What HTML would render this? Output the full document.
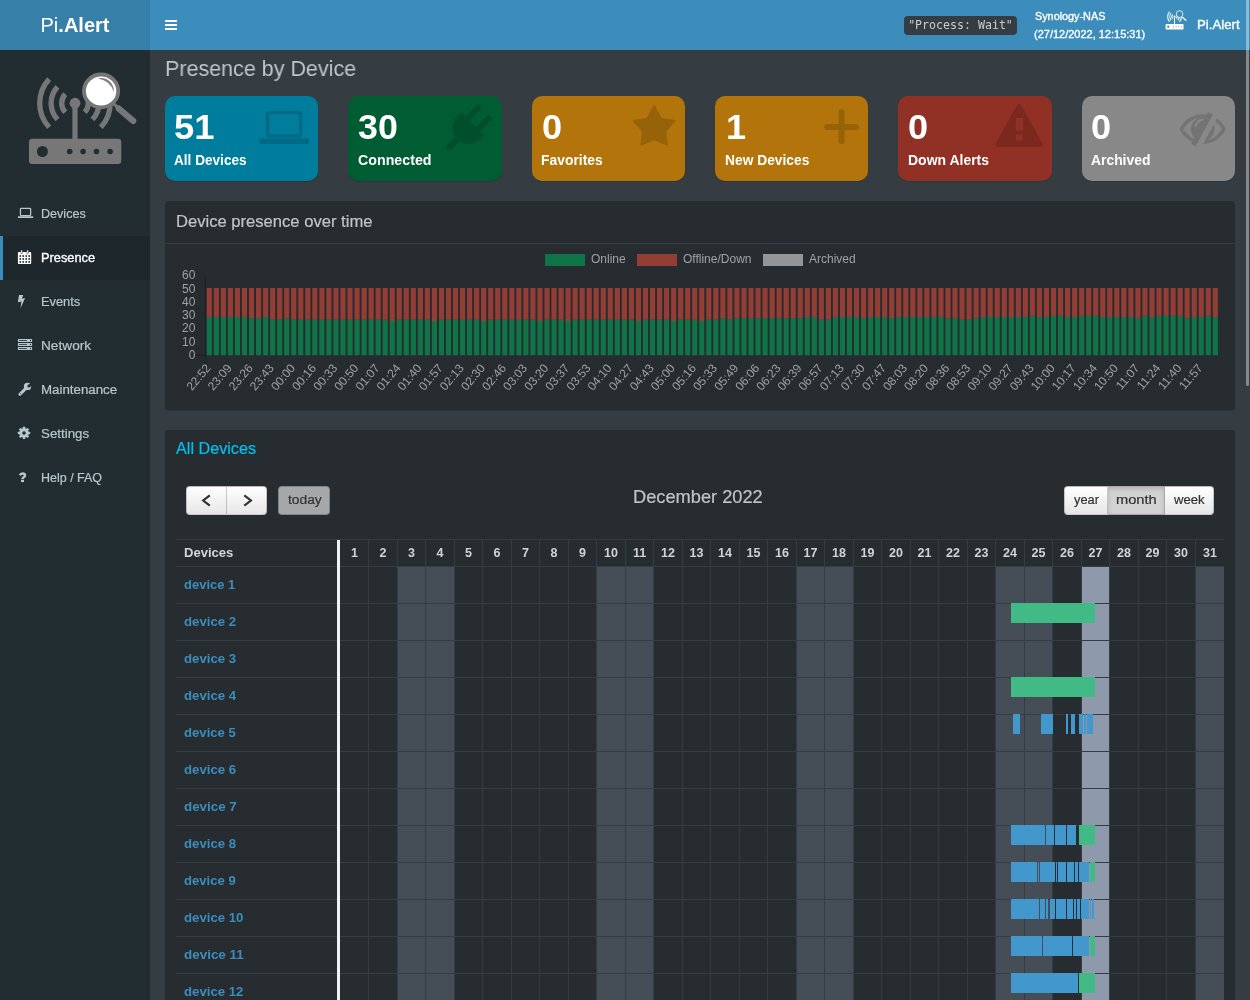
<!DOCTYPE html>
<html lang="en">
<head>
<meta charset="utf-8">
<title>Pi.Alert - Presence</title>
<style>
*{box-sizing:border-box}
html,body{margin:0;padding:0}
body{width:1250px;height:1000px;overflow:hidden;position:relative;background:#353c42;font-family:"Liberation Sans",Arial,sans-serif;font-size:14px;color:#bec5cb}
#root{position:absolute;left:0;top:0;width:1250px;height:1000px;overflow:hidden;will-change:transform}
.abs{position:absolute}
/* header */
#hdr{position:absolute;left:0;top:0;width:1250px;height:50px;background:#3c8dbc}
#logo{position:absolute;left:0;top:0;width:150px;height:50px;background:#367fa9;color:#fff;font-size:20px;line-height:50px;text-align:center}
#logo b{font-weight:700}
#burger{position:absolute;left:165px;top:20px;width:12px;height:10px}
#burger i{position:absolute;left:0;width:12px;height:2px;background:#fff}
#proc{position:absolute;left:904px;top:16px;width:113px;height:19px;background:#353c42;border-radius:4px;color:#c8ced3;font-family:"DejaVu Sans Mono","Liberation Mono",monospace;font-size:11.6px;line-height:19px;text-align:center;white-space:nowrap}
.hl1{position:absolute;color:#fff;font-weight:700;font-size:11.5px;white-space:nowrap;transform-origin:0 0}
#hname{position:absolute;left:1197px;top:15px;color:#fff;font-size:14px;font-weight:700;white-space:nowrap;transform-origin:0 0}
/* sidebar */
#side{position:absolute;left:0;top:50px;width:150px;height:950px;background:#222d32}
.mi{position:absolute;left:0;width:150px;height:44px;color:#b8c7ce;font-size:13.5px;line-height:44px}
.mi span{position:absolute;left:41px;top:0;white-space:nowrap;transform-origin:0 50%}
.mi.act{background:#1e282c;border-left:3px solid #3c8dbc;color:#fff}
.mi.act span{left:38px;font-weight:700}
.mi svg{position:absolute;left:17px;top:15px}
.mi.act svg{left:14px}
/* title */
#title{position:absolute;left:165px;top:51px;font-size:22.5px;line-height:34px;color:#bec5cb;white-space:nowrap;transform-origin:0 50%}
/* small boxes */
.sb{position:absolute;top:96px;height:85px;border-radius:10px;color:#fff;overflow:hidden;box-shadow:0 1px 1px rgba(0,0,0,.12)}
.sb h3{position:absolute;left:9px;top:10px;margin:0;font-size:35px;line-height:40px;font-weight:700;transform-origin:0 50%}
.sb p{position:absolute;left:10px;top:53px;margin:0;font-size:14.5px;line-height:20px;font-weight:700;white-space:nowrap;transform-origin:0 50%}
.sb svg{position:absolute}
/* boxes */
.box{position:absolute;left:165px;width:1070px;background:#272c30;border-radius:3px;box-shadow:0 1px 1px rgba(0,0,0,.1)}
.bt{position:absolute;left:11px;font-size:16.5px;white-space:nowrap;transform-origin:0 50%}
/* calendar */
.btn{position:absolute;top:486px;height:29px;background:linear-gradient(#fff,#e6e6e6);color:#333;font-size:13.5px;line-height:27px;text-align:center;border:1px solid rgba(0,0,0,.2)}
.dh{position:absolute;top:540px;height:26px;line-height:27px;text-align:center;font-weight:700;font-size:12.5px;color:#d0d4d8}
.we{position:absolute;top:567px;height:433px;background:#454d57}
.td{position:absolute;top:567px;height:433px;background:#8e9aab}
.vl{position:absolute;top:540px;height:460px;width:1px;background:#363c43}
.hl{position:absolute;left:176px;width:1048px;height:1px;background:#363c43}
.dev{position:absolute;left:184px;height:36px;line-height:35px;color:#3c8dbc;font-weight:700;font-size:13.5px;white-space:nowrap;transform-origin:0 50%}
.t{position:absolute;white-space:nowrap;transform-origin:0 0}
.ev{position:absolute;height:20px}
.evb{background:#4297cd}
.evg{background:#42ba85}
</style>
</head>
<body>
<div id="root">
<!-- header -->
<div id="hdr">
  <div id="logo">Pi<b>.Alert</b></div>
  <div id="burger"><i style="top:0"></i><i style="top:4px"></i><i style="top:8px"></i></div>
  <div id="proc">"Process: Wait"</div>
</div>
<!-- sidebar -->
<div id="side">
  <div class="mi" style="top:141px"></div>
  <div class="mi act" style="top:186px"></div>
  <div class="mi" style="top:229px"></div>
  <div class="mi" style="top:273px"></div>
  <div class="mi" style="top:317px"></div>
  <div class="mi" style="top:361px"></div>
  <div class="mi" style="top:405px"></div>
</div>

<!-- small boxes -->
<div class="sb" style="left:165px;width:153px;background:#007c9c"></div>
<div class="sb" style="left:348px;width:154px;background:#005c32"></div>
<div class="sb" style="left:532px;width:153px;background:#b2740b"></div>
<div class="sb" style="left:715px;width:153px;background:#b2740b"></div>
<div class="sb" style="left:898px;width:154px;background:#913024"></div>
<div class="sb" style="left:1082px;width:153px;background:#888"></div>
<!-- chart box -->
<div class="box" style="top:201px;height:209px">
  
  <div class="abs" style="left:1px;top:42px;width:1068px;height:1px;background:#3a4046"></div>
</div>
<div class="abs" style="left:165px;top:244px;width:1070px;height:165px">
<svg class="chart" width="1070" height="165" viewBox="165 244 1070 165" font-family="Liberation Sans, Arial, sans-serif" font-size="12">
<rect x="545" y="254" width="40" height="12" fill="rgba(0,166,89,.6)"/>
<text x="591" y="263.2" fill="#a2a2a2">Online</text>
<rect x="637" y="254" width="40" height="12" fill="rgba(222,74,56,.6)"/>
<text x="683" y="263.2" fill="#a2a2a2">Offline/Down</text>
<rect x="763" y="254" width="40" height="12" fill="rgba(220,220,220,.6)"/>
<text x="809" y="263.2" fill="#a2a2a2">Archived</text>
<rect x="204.8" y="276" width="1" height="87.3" fill="rgba(0,0,0,.28)"/>
<rect x="195.8" y="354.8" width="10" height="1" fill="rgba(0,0,0,.28)"/>
<text x="195.4" y="358.7" text-anchor="end" fill="#a2a2a2">0</text>
<text x="195.4" y="345.5" text-anchor="end" fill="#a2a2a2">10</text>
<text x="195.4" y="332.3" text-anchor="end" fill="#a2a2a2">20</text>
<text x="195.4" y="319.0" text-anchor="end" fill="#a2a2a2">30</text>
<text x="195.4" y="305.8" text-anchor="end" fill="#a2a2a2">40</text>
<text x="195.4" y="292.6" text-anchor="end" fill="#a2a2a2">50</text>
<text x="195.4" y="279.4" text-anchor="end" fill="#a2a2a2">60</text>
<path d="M206.77 355.30V316.97h5.1V355.30zM213.80 355.30V316.97h5.1V355.30zM220.84 355.30V316.97h5.1V355.30zM227.87 355.30V316.97h5.1V355.30zM234.91 355.30V316.97h5.1V355.30zM241.94 355.30V316.97h5.1V355.30zM248.98 355.30V318.29h5.1V355.30zM256.01 355.30V318.29h5.1V355.30zM263.05 355.30V316.97h5.1V355.30zM270.08 355.30V319.61h5.1V355.30zM277.12 355.30V319.61h5.1V355.30zM284.15 355.30V318.29h5.1V355.30zM291.19 355.30V319.61h5.1V355.30zM298.22 355.30V319.61h5.1V355.30zM305.26 355.30V319.61h5.1V355.30zM312.29 355.30V319.61h5.1V355.30zM319.33 355.30V319.61h5.1V355.30zM326.36 355.30V319.61h5.1V355.30zM333.40 355.30V319.61h5.1V355.30zM340.43 355.30V319.61h5.1V355.30zM347.47 355.30V319.61h5.1V355.30zM354.50 355.30V319.61h5.1V355.30zM361.54 355.30V319.61h5.1V355.30zM368.57 355.30V319.61h5.1V355.30zM375.61 355.30V319.61h5.1V355.30zM382.64 355.30V319.61h5.1V355.30zM389.68 355.30V320.94h5.1V355.30zM396.71 355.30V319.61h5.1V355.30zM403.75 355.30V319.61h5.1V355.30zM410.78 355.30V319.61h5.1V355.30zM417.82 355.30V319.61h5.1V355.30zM424.85 355.30V319.61h5.1V355.30zM431.89 355.30V320.94h5.1V355.30zM438.92 355.30V319.61h5.1V355.30zM445.96 355.30V319.61h5.1V355.30zM452.99 355.30V319.61h5.1V355.30zM460.03 355.30V319.61h5.1V355.30zM467.06 355.30V319.61h5.1V355.30zM474.10 355.30V319.61h5.1V355.30zM481.13 355.30V320.94h5.1V355.30zM488.17 355.30V319.61h5.1V355.30zM495.20 355.30V319.61h5.1V355.30zM502.24 355.30V319.61h5.1V355.30zM509.27 355.30V319.61h5.1V355.30zM516.31 355.30V319.61h5.1V355.30zM523.34 355.30V319.61h5.1V355.30zM530.38 355.30V319.61h5.1V355.30zM537.41 355.30V320.94h5.1V355.30zM544.45 355.30V319.61h5.1V355.30zM551.48 355.30V319.61h5.1V355.30zM558.52 355.30V319.61h5.1V355.30zM565.55 355.30V320.94h5.1V355.30zM572.59 355.30V319.61h5.1V355.30zM579.62 355.30V319.61h5.1V355.30zM586.66 355.30V319.61h5.1V355.30zM593.69 355.30V319.61h5.1V355.30zM600.73 355.30V319.61h5.1V355.30zM607.76 355.30V319.61h5.1V355.30zM614.80 355.30V319.61h5.1V355.30zM621.83 355.30V319.61h5.1V355.30zM628.87 355.30V319.61h5.1V355.30zM635.90 355.30V320.94h5.1V355.30zM642.94 355.30V319.61h5.1V355.30zM649.97 355.30V319.61h5.1V355.30zM657.01 355.30V319.61h5.1V355.30zM664.04 355.30V319.61h5.1V355.30zM671.08 355.30V320.94h5.1V355.30zM678.11 355.30V319.61h5.1V355.30zM685.15 355.30V319.61h5.1V355.30zM692.18 355.30V319.61h5.1V355.30zM699.22 355.30V320.94h5.1V355.30zM706.25 355.30V319.61h5.1V355.30zM713.29 355.30V319.61h5.1V355.30zM720.32 355.30V318.29h5.1V355.30zM727.36 355.30V319.61h5.1V355.30zM734.39 355.30V318.29h5.1V355.30zM741.43 355.30V318.29h5.1V355.30zM748.46 355.30V318.29h5.1V355.30zM755.50 355.30V318.29h5.1V355.30zM762.53 355.30V318.29h5.1V355.30zM769.57 355.30V318.29h5.1V355.30zM776.60 355.30V318.29h5.1V355.30zM783.64 355.30V318.29h5.1V355.30zM790.67 355.30V318.29h5.1V355.30zM797.71 355.30V318.29h5.1V355.30zM804.74 355.30V316.97h5.1V355.30zM811.78 355.30V316.97h5.1V355.30zM818.81 355.30V319.61h5.1V355.30zM825.85 355.30V319.61h5.1V355.30zM832.88 355.30V316.97h5.1V355.30zM839.92 355.30V316.97h5.1V355.30zM846.95 355.30V316.97h5.1V355.30zM853.99 355.30V316.97h5.1V355.30zM861.02 355.30V318.29h5.1V355.30zM868.06 355.30V316.97h5.1V355.30zM875.09 355.30V316.97h5.1V355.30zM882.13 355.30V316.97h5.1V355.30zM889.16 355.30V318.29h5.1V355.30zM896.20 355.30V316.97h5.1V355.30zM903.23 355.30V316.97h5.1V355.30zM910.27 355.30V316.97h5.1V355.30zM917.30 355.30V316.97h5.1V355.30zM924.34 355.30V316.97h5.1V355.30zM931.37 355.30V316.97h5.1V355.30zM938.41 355.30V316.97h5.1V355.30zM945.44 355.30V318.29h5.1V355.30zM952.48 355.30V318.29h5.1V355.30zM959.51 355.30V319.61h5.1V355.30zM966.55 355.30V319.61h5.1V355.30zM973.58 355.30V318.29h5.1V355.30zM980.62 355.30V316.97h5.1V355.30zM987.65 355.30V316.97h5.1V355.30zM994.69 355.30V316.97h5.1V355.30zM1001.72 355.30V316.97h5.1V355.30zM1008.76 355.30V316.97h5.1V355.30zM1015.79 355.30V316.97h5.1V355.30zM1022.83 355.30V316.97h5.1V355.30zM1029.86 355.30V315.65h5.1V355.30zM1036.90 355.30V316.97h5.1V355.30zM1043.93 355.30V316.97h5.1V355.30zM1050.97 355.30V315.65h5.1V355.30zM1058.00 355.30V315.65h5.1V355.30zM1065.04 355.30V316.97h5.1V355.30zM1072.07 355.30V316.97h5.1V355.30zM1079.11 355.30V315.65h5.1V355.30zM1086.14 355.30V315.65h5.1V355.30zM1093.18 355.30V315.65h5.1V355.30zM1100.21 355.30V316.97h5.1V355.30zM1107.25 355.30V316.97h5.1V355.30zM1114.28 355.30V316.97h5.1V355.30zM1121.32 355.30V316.97h5.1V355.30zM1128.35 355.30V316.97h5.1V355.30zM1135.39 355.30V318.29h5.1V355.30zM1142.42 355.30V315.65h5.1V355.30zM1149.46 355.30V316.97h5.1V355.30zM1156.49 355.30V315.65h5.1V355.30zM1163.53 355.30V315.65h5.1V355.30zM1170.56 355.30V315.65h5.1V355.30zM1177.60 355.30V315.65h5.1V355.30zM1184.63 355.30V318.29h5.1V355.30zM1191.67 355.30V316.97h5.1V355.30zM1198.70 355.30V316.97h5.1V355.30zM1205.74 355.30V315.65h5.1V355.30zM1212.77 355.30V316.97h5.1V355.30z" fill="rgba(0,166,89,.6)"/>
<path d="M206.77 316.97V287.89h5.1V316.97zM213.80 316.97V287.89h5.1V316.97zM220.84 316.97V287.89h5.1V316.97zM227.87 316.97V287.89h5.1V316.97zM234.91 316.97V287.89h5.1V316.97zM241.94 316.97V287.89h5.1V316.97zM248.98 318.29V287.89h5.1V318.29zM256.01 318.29V287.89h5.1V318.29zM263.05 316.97V287.89h5.1V316.97zM270.08 319.61V287.89h5.1V319.61zM277.12 319.61V287.89h5.1V319.61zM284.15 318.29V287.89h5.1V318.29zM291.19 319.61V287.89h5.1V319.61zM298.22 319.61V287.89h5.1V319.61zM305.26 319.61V287.89h5.1V319.61zM312.29 319.61V287.89h5.1V319.61zM319.33 319.61V287.89h5.1V319.61zM326.36 319.61V287.89h5.1V319.61zM333.40 319.61V287.89h5.1V319.61zM340.43 319.61V287.89h5.1V319.61zM347.47 319.61V287.89h5.1V319.61zM354.50 319.61V287.89h5.1V319.61zM361.54 319.61V287.89h5.1V319.61zM368.57 319.61V287.89h5.1V319.61zM375.61 319.61V287.89h5.1V319.61zM382.64 319.61V287.89h5.1V319.61zM389.68 320.94V287.89h5.1V320.94zM396.71 319.61V287.89h5.1V319.61zM403.75 319.61V287.89h5.1V319.61zM410.78 319.61V287.89h5.1V319.61zM417.82 319.61V287.89h5.1V319.61zM424.85 319.61V287.89h5.1V319.61zM431.89 320.94V287.89h5.1V320.94zM438.92 319.61V287.89h5.1V319.61zM445.96 319.61V287.89h5.1V319.61zM452.99 319.61V287.89h5.1V319.61zM460.03 319.61V287.89h5.1V319.61zM467.06 319.61V287.89h5.1V319.61zM474.10 319.61V287.89h5.1V319.61zM481.13 320.94V287.89h5.1V320.94zM488.17 319.61V287.89h5.1V319.61zM495.20 319.61V287.89h5.1V319.61zM502.24 319.61V287.89h5.1V319.61zM509.27 319.61V287.89h5.1V319.61zM516.31 319.61V287.89h5.1V319.61zM523.34 319.61V287.89h5.1V319.61zM530.38 319.61V287.89h5.1V319.61zM537.41 320.94V287.89h5.1V320.94zM544.45 319.61V287.89h5.1V319.61zM551.48 319.61V287.89h5.1V319.61zM558.52 319.61V287.89h5.1V319.61zM565.55 320.94V287.89h5.1V320.94zM572.59 319.61V287.89h5.1V319.61zM579.62 319.61V287.89h5.1V319.61zM586.66 319.61V287.89h5.1V319.61zM593.69 319.61V287.89h5.1V319.61zM600.73 319.61V287.89h5.1V319.61zM607.76 319.61V287.89h5.1V319.61zM614.80 319.61V287.89h5.1V319.61zM621.83 319.61V287.89h5.1V319.61zM628.87 319.61V287.89h5.1V319.61zM635.90 320.94V287.89h5.1V320.94zM642.94 319.61V287.89h5.1V319.61zM649.97 319.61V287.89h5.1V319.61zM657.01 319.61V287.89h5.1V319.61zM664.04 319.61V287.89h5.1V319.61zM671.08 320.94V287.89h5.1V320.94zM678.11 319.61V287.89h5.1V319.61zM685.15 319.61V287.89h5.1V319.61zM692.18 319.61V287.89h5.1V319.61zM699.22 320.94V287.89h5.1V320.94zM706.25 319.61V287.89h5.1V319.61zM713.29 319.61V287.89h5.1V319.61zM720.32 318.29V287.89h5.1V318.29zM727.36 319.61V287.89h5.1V319.61zM734.39 318.29V287.89h5.1V318.29zM741.43 318.29V287.89h5.1V318.29zM748.46 318.29V287.89h5.1V318.29zM755.50 318.29V287.89h5.1V318.29zM762.53 318.29V287.89h5.1V318.29zM769.57 318.29V287.89h5.1V318.29zM776.60 318.29V287.89h5.1V318.29zM783.64 318.29V287.89h5.1V318.29zM790.67 318.29V287.89h5.1V318.29zM797.71 318.29V287.89h5.1V318.29zM804.74 316.97V287.89h5.1V316.97zM811.78 316.97V287.89h5.1V316.97zM818.81 319.61V287.89h5.1V319.61zM825.85 319.61V287.89h5.1V319.61zM832.88 316.97V287.89h5.1V316.97zM839.92 316.97V287.89h5.1V316.97zM846.95 316.97V287.89h5.1V316.97zM853.99 316.97V287.89h5.1V316.97zM861.02 318.29V287.89h5.1V318.29zM868.06 316.97V287.89h5.1V316.97zM875.09 316.97V287.89h5.1V316.97zM882.13 316.97V287.89h5.1V316.97zM889.16 318.29V287.89h5.1V318.29zM896.20 316.97V287.89h5.1V316.97zM903.23 316.97V287.89h5.1V316.97zM910.27 316.97V287.89h5.1V316.97zM917.30 316.97V287.89h5.1V316.97zM924.34 316.97V287.89h5.1V316.97zM931.37 316.97V287.89h5.1V316.97zM938.41 316.97V287.89h5.1V316.97zM945.44 318.29V287.89h5.1V318.29zM952.48 318.29V287.89h5.1V318.29zM959.51 319.61V287.89h5.1V319.61zM966.55 319.61V287.89h5.1V319.61zM973.58 318.29V287.89h5.1V318.29zM980.62 316.97V287.89h5.1V316.97zM987.65 316.97V287.89h5.1V316.97zM994.69 316.97V287.89h5.1V316.97zM1001.72 316.97V287.89h5.1V316.97zM1008.76 316.97V287.89h5.1V316.97zM1015.79 316.97V287.89h5.1V316.97zM1022.83 316.97V287.89h5.1V316.97zM1029.86 315.65V287.89h5.1V315.65zM1036.90 316.97V287.89h5.1V316.97zM1043.93 316.97V287.89h5.1V316.97zM1050.97 315.65V287.89h5.1V315.65zM1058.00 315.65V287.89h5.1V315.65zM1065.04 316.97V287.89h5.1V316.97zM1072.07 316.97V287.89h5.1V316.97zM1079.11 315.65V287.89h5.1V315.65zM1086.14 315.65V287.89h5.1V315.65zM1093.18 315.65V287.89h5.1V315.65zM1100.21 316.97V287.89h5.1V316.97zM1107.25 316.97V287.89h5.1V316.97zM1114.28 316.97V287.89h5.1V316.97zM1121.32 316.97V287.89h5.1V316.97zM1128.35 316.97V287.89h5.1V316.97zM1135.39 318.29V287.89h5.1V318.29zM1142.42 315.65V287.89h5.1V315.65zM1149.46 316.97V287.89h5.1V316.97zM1156.49 315.65V287.89h5.1V315.65zM1163.53 315.65V287.89h5.1V315.65zM1170.56 315.65V287.89h5.1V315.65zM1177.60 315.65V287.89h5.1V315.65zM1184.63 318.29V287.89h5.1V318.29zM1191.67 316.97V287.89h5.1V316.97zM1198.70 316.97V287.89h5.1V316.97zM1205.74 315.65V287.89h5.1V315.65zM1212.77 316.97V287.89h5.1V316.97z" fill="rgba(222,74,56,.6)"/>
<text transform="translate(208.12 365.60) rotate(-50)" text-anchor="end" y="4.2" fill="#a2a2a2">22:52</text>
<text transform="translate(229.22 365.60) rotate(-50)" text-anchor="end" y="4.2" fill="#a2a2a2">23:09</text>
<text transform="translate(250.33 365.60) rotate(-50)" text-anchor="end" y="4.2" fill="#a2a2a2">23:26</text>
<text transform="translate(271.43 365.60) rotate(-50)" text-anchor="end" y="4.2" fill="#a2a2a2">23:43</text>
<text transform="translate(292.54 365.60) rotate(-50)" text-anchor="end" y="4.2" fill="#a2a2a2">00:00</text>
<text transform="translate(313.64 365.60) rotate(-50)" text-anchor="end" y="4.2" fill="#a2a2a2">00:16</text>
<text transform="translate(334.75 365.60) rotate(-50)" text-anchor="end" y="4.2" fill="#a2a2a2">00:33</text>
<text transform="translate(355.85 365.60) rotate(-50)" text-anchor="end" y="4.2" fill="#a2a2a2">00:50</text>
<text transform="translate(376.96 365.60) rotate(-50)" text-anchor="end" y="4.2" fill="#a2a2a2">01:07</text>
<text transform="translate(398.06 365.60) rotate(-50)" text-anchor="end" y="4.2" fill="#a2a2a2">01:24</text>
<text transform="translate(419.17 365.60) rotate(-50)" text-anchor="end" y="4.2" fill="#a2a2a2">01:40</text>
<text transform="translate(440.27 365.60) rotate(-50)" text-anchor="end" y="4.2" fill="#a2a2a2">01:57</text>
<text transform="translate(461.38 365.60) rotate(-50)" text-anchor="end" y="4.2" fill="#a2a2a2">02:13</text>
<text transform="translate(482.48 365.60) rotate(-50)" text-anchor="end" y="4.2" fill="#a2a2a2">02:30</text>
<text transform="translate(503.59 365.60) rotate(-50)" text-anchor="end" y="4.2" fill="#a2a2a2">02:46</text>
<text transform="translate(524.69 365.60) rotate(-50)" text-anchor="end" y="4.2" fill="#a2a2a2">03:03</text>
<text transform="translate(545.80 365.60) rotate(-50)" text-anchor="end" y="4.2" fill="#a2a2a2">03:20</text>
<text transform="translate(566.90 365.60) rotate(-50)" text-anchor="end" y="4.2" fill="#a2a2a2">03:37</text>
<text transform="translate(588.01 365.60) rotate(-50)" text-anchor="end" y="4.2" fill="#a2a2a2">03:53</text>
<text transform="translate(609.11 365.60) rotate(-50)" text-anchor="end" y="4.2" fill="#a2a2a2">04:10</text>
<text transform="translate(630.22 365.60) rotate(-50)" text-anchor="end" y="4.2" fill="#a2a2a2">04:27</text>
<text transform="translate(651.32 365.60) rotate(-50)" text-anchor="end" y="4.2" fill="#a2a2a2">04:43</text>
<text transform="translate(672.43 365.60) rotate(-50)" text-anchor="end" y="4.2" fill="#a2a2a2">05:00</text>
<text transform="translate(693.53 365.60) rotate(-50)" text-anchor="end" y="4.2" fill="#a2a2a2">05:16</text>
<text transform="translate(714.64 365.60) rotate(-50)" text-anchor="end" y="4.2" fill="#a2a2a2">05:33</text>
<text transform="translate(735.74 365.60) rotate(-50)" text-anchor="end" y="4.2" fill="#a2a2a2">05:49</text>
<text transform="translate(756.85 365.60) rotate(-50)" text-anchor="end" y="4.2" fill="#a2a2a2">06:06</text>
<text transform="translate(777.95 365.60) rotate(-50)" text-anchor="end" y="4.2" fill="#a2a2a2">06:23</text>
<text transform="translate(799.06 365.60) rotate(-50)" text-anchor="end" y="4.2" fill="#a2a2a2">06:39</text>
<text transform="translate(820.16 365.60) rotate(-50)" text-anchor="end" y="4.2" fill="#a2a2a2">06:57</text>
<text transform="translate(841.27 365.60) rotate(-50)" text-anchor="end" y="4.2" fill="#a2a2a2">07:13</text>
<text transform="translate(862.37 365.60) rotate(-50)" text-anchor="end" y="4.2" fill="#a2a2a2">07:30</text>
<text transform="translate(883.48 365.60) rotate(-50)" text-anchor="end" y="4.2" fill="#a2a2a2">07:47</text>
<text transform="translate(904.58 365.60) rotate(-50)" text-anchor="end" y="4.2" fill="#a2a2a2">08:03</text>
<text transform="translate(925.69 365.60) rotate(-50)" text-anchor="end" y="4.2" fill="#a2a2a2">08:20</text>
<text transform="translate(946.79 365.60) rotate(-50)" text-anchor="end" y="4.2" fill="#a2a2a2">08:36</text>
<text transform="translate(967.90 365.60) rotate(-50)" text-anchor="end" y="4.2" fill="#a2a2a2">08:53</text>
<text transform="translate(989.00 365.60) rotate(-50)" text-anchor="end" y="4.2" fill="#a2a2a2">09:10</text>
<text transform="translate(1010.11 365.60) rotate(-50)" text-anchor="end" y="4.2" fill="#a2a2a2">09:27</text>
<text transform="translate(1031.21 365.60) rotate(-50)" text-anchor="end" y="4.2" fill="#a2a2a2">09:43</text>
<text transform="translate(1052.32 365.60) rotate(-50)" text-anchor="end" y="4.2" fill="#a2a2a2">10:00</text>
<text transform="translate(1073.42 365.60) rotate(-50)" text-anchor="end" y="4.2" fill="#a2a2a2">10:17</text>
<text transform="translate(1094.53 365.60) rotate(-50)" text-anchor="end" y="4.2" fill="#a2a2a2">10:34</text>
<text transform="translate(1115.63 365.60) rotate(-50)" text-anchor="end" y="4.2" fill="#a2a2a2">10:50</text>
<text transform="translate(1136.74 365.60) rotate(-50)" text-anchor="end" y="4.2" fill="#a2a2a2">11:07</text>
<text transform="translate(1157.84 365.60) rotate(-50)" text-anchor="end" y="4.2" fill="#a2a2a2">11:24</text>
<text transform="translate(1178.95 365.60) rotate(-50)" text-anchor="end" y="4.2" fill="#a2a2a2">11:40</text>
<text transform="translate(1200.05 365.60) rotate(-50)" text-anchor="end" y="4.2" fill="#a2a2a2">11:57</text>
</svg>
</div>
<!-- calendar box -->
<div class="box" style="top:430px;height:580px">
  
</div>
<div class="btn" style="left:186px;width:41px;border-radius:4px 0 0 4px"></div>
<div class="btn" style="left:227px;width:40px;border-left:none;border-radius:0 4px 4px 0"></div>
<div class="btn" style="left:278px;width:52px;border-radius:4px;background:#a6a7a9;color:#333"></div>
<div class="btn" style="left:1064px;width:44px;border-radius:4px 0 0 4px"></div>
<div class="btn" style="left:1108px;width:57px;border-left:none;border-radius:0;background:#d2d2d2;box-shadow:inset 0 2px 4px rgba(0,0,0,.15)"></div>
<div class="btn" style="left:1165px;width:49px;border-left:none;border-radius:0 4px 4px 0"></div>
<!-- calendar grid -->
<div class="hl" style="top:539px"></div>
<div class="dh" style="left:341px;width:27px">1</div>
<div class="dh" style="left:369px;width:28px">2</div>
<div class="dh" style="left:398px;width:27px">3</div>
<div class="dh" style="left:426px;width:28px">4</div>
<div class="dh" style="left:455px;width:27px">5</div>
<div class="dh" style="left:483px;width:28px">6</div>
<div class="dh" style="left:512px;width:27px">7</div>
<div class="dh" style="left:540px;width:28px">8</div>
<div class="dh" style="left:569px;width:27px">9</div>
<div class="dh" style="left:597px;width:28px">10</div>
<div class="dh" style="left:626px;width:27px">11</div>
<div class="dh" style="left:654px;width:28px">12</div>
<div class="dh" style="left:683px;width:27px">13</div>
<div class="dh" style="left:711px;width:28px">14</div>
<div class="dh" style="left:740px;width:27px">15</div>
<div class="dh" style="left:768px;width:28px">16</div>
<div class="dh" style="left:797px;width:27px">17</div>
<div class="dh" style="left:825px;width:28px">18</div>
<div class="dh" style="left:854px;width:27px">19</div>
<div class="dh" style="left:882px;width:28px">20</div>
<div class="dh" style="left:911px;width:27px">21</div>
<div class="dh" style="left:939px;width:28px">22</div>
<div class="dh" style="left:968px;width:27px">23</div>
<div class="dh" style="left:996px;width:28px">24</div>
<div class="dh" style="left:1025px;width:27px">25</div>
<div class="dh" style="left:1053px;width:28px">26</div>
<div class="dh" style="left:1082px;width:27px">27</div>
<div class="dh" style="left:1110px;width:28px">28</div>
<div class="dh" style="left:1139px;width:27px">29</div>
<div class="dh" style="left:1167px;width:28px">30</div>
<div class="dh" style="left:1196px;width:28px">31</div>
<div class="we" style="left:398px;width:27px"></div>
<div class="we" style="left:426px;width:28px"></div>
<div class="we" style="left:597px;width:28px"></div>
<div class="we" style="left:626px;width:27px"></div>
<div class="we" style="left:797px;width:27px"></div>
<div class="we" style="left:825px;width:28px"></div>
<div class="we" style="left:996px;width:28px"></div>
<div class="we" style="left:1025px;width:27px"></div>
<div class="we" style="left:1196px;width:28px"></div>
<div class="td" style="left:1082px;width:27px"></div>
<div class="vl" style="left:368px"></div>
<div class="vl" style="left:397px"></div>
<div class="vl" style="left:425px"></div>
<div class="vl" style="left:454px"></div>
<div class="vl" style="left:482px"></div>
<div class="vl" style="left:511px"></div>
<div class="vl" style="left:539px"></div>
<div class="vl" style="left:568px"></div>
<div class="vl" style="left:596px"></div>
<div class="vl" style="left:625px"></div>
<div class="vl" style="left:653px"></div>
<div class="vl" style="left:682px"></div>
<div class="vl" style="left:710px"></div>
<div class="vl" style="left:739px"></div>
<div class="vl" style="left:767px"></div>
<div class="vl" style="left:796px"></div>
<div class="vl" style="left:824px"></div>
<div class="vl" style="left:853px"></div>
<div class="vl" style="left:881px"></div>
<div class="vl" style="left:910px"></div>
<div class="vl" style="left:938px"></div>
<div class="vl" style="left:967px"></div>
<div class="vl" style="left:995px"></div>
<div class="vl" style="left:1024px"></div>
<div class="vl" style="left:1052px"></div>
<div class="vl" style="left:1081px"></div>
<div class="vl" style="left:1109px"></div>
<div class="vl" style="left:1138px"></div>
<div class="vl" style="left:1166px"></div>
<div class="vl" style="left:1195px"></div>
<div class="hl" style="top:566px"></div>
<div class="hl" style="top:603px"></div>
<div class="hl" style="top:640px"></div>
<div class="hl" style="top:677px"></div>
<div class="hl" style="top:714px"></div>
<div class="hl" style="top:751px"></div>
<div class="hl" style="top:788px"></div>
<div class="hl" style="top:825px"></div>
<div class="hl" style="top:862px"></div>
<div class="hl" style="top:899px"></div>
<div class="hl" style="top:936px"></div>
<div class="hl" style="top:973px"></div>
<div class="hl" style="top:1010px"></div>
<div class="abs" style="left:337px;top:540px;width:3px;height:460px;background:#f1f1f1"></div>
<svg class="abs" style="left:20px;top:60px" width="130" height="115" viewBox="20 60 130 115"><path d="M65.27 112.27A13.3 13.3 0 0 1 65.27 94.13M84.73 94.13A13.3 13.3 0 0 1 84.73 112.27M57.52 119.50A23.9 23.9 0 0 1 57.52 86.90M92.48 86.90A23.9 23.9 0 0 1 92.48 119.50M49.18 127.27A35.3 35.3 0 0 1 49.18 79.13M100.82 79.13A35.3 35.3 0 0 1 100.82 127.27" fill="none" stroke="#777" stroke-width="5.3"/>
<rect x="72.4" y="103" width="5.2" height="37" fill="#777"/><circle cx="75" cy="103.2" r="5.4" fill="#777"/>
<path d="M32.3 138.8h85.7a3.3 3.3 0 0 1 3.3 3.3v18.7a3.3 3.3 0 0 1-3.3 3.3h-85.7a3.3 3.3 0 0 1-3.3-3.3v-18.7a3.3 3.3 0 0 1 3.3-3.3zM36.9 151.5a5.5 5.5 0 1 0 11.0 0a5.5 5.5 0 1 0 -11.0 0zM66.9 151.5a2.8 2.8 0 1 0 5.6 0a2.8 2.8 0 1 0 -5.6 0zM80.3 151.5a2.8 2.8 0 1 0 5.6 0a2.8 2.8 0 1 0 -5.6 0zM93.7 151.5a2.8 2.8 0 1 0 5.6 0a2.8 2.8 0 1 0 -5.6 0zM107.3 151.5a2.8 2.8 0 1 0 5.6 0a2.8 2.8 0 1 0 -5.6 0z" fill="#777" fill-rule="evenodd"/>
<path d="M113.3 103.5L119.3 108.7" stroke="#777" stroke-width="3.2" fill="none"/>
<path d="M118.8 108.6L133.2 120.9" stroke="#777" stroke-width="6.3" stroke-linecap="round" fill="none"/>
<ellipse cx="101.1" cy="90.9" rx="17.1" ry="16.4" fill="#fff" stroke="#777" stroke-width="3.8"/>
<path d="M97.8 78.5A12.8 12.8 0 0 1 113.85 92A19 19 0 0 0 97.8 78.5z" fill="#808080"/></svg>
<svg class="abs" style="left:1160px;top:5px" width="32" height="30" viewBox="0 0 32 30"><g transform="translate(-0.037 -9.979) scale(0.1944 0.2095)"><path d="M65.27 112.27A13.3 13.3 0 0 1 65.27 94.13M84.73 94.13A13.3 13.3 0 0 1 84.73 112.27M57.52 119.50A23.9 23.9 0 0 1 57.52 86.90M92.48 86.90A23.9 23.9 0 0 1 92.48 119.50M49.18 127.27A35.3 35.3 0 0 1 49.18 79.13M100.82 79.13A35.3 35.3 0 0 1 100.82 127.27" fill="none" stroke="#fff" stroke-width="5.3"/>
<rect x="72.4" y="103" width="5.2" height="37" fill="#fff"/><circle cx="75" cy="103.2" r="5.4" fill="#fff"/>
<path d="M32.3 138.8h85.7a3.3 3.3 0 0 1 3.3 3.3v18.7a3.3 3.3 0 0 1-3.3 3.3h-85.7a3.3 3.3 0 0 1-3.3-3.3v-18.7a3.3 3.3 0 0 1 3.3-3.3zM36.9 151.5a5.5 5.5 0 1 0 11.0 0a5.5 5.5 0 1 0 -11.0 0zM66.9 151.5a2.8 2.8 0 1 0 5.6 0a2.8 2.8 0 1 0 -5.6 0zM80.3 151.5a2.8 2.8 0 1 0 5.6 0a2.8 2.8 0 1 0 -5.6 0zM93.7 151.5a2.8 2.8 0 1 0 5.6 0a2.8 2.8 0 1 0 -5.6 0zM107.3 151.5a2.8 2.8 0 1 0 5.6 0a2.8 2.8 0 1 0 -5.6 0z" fill="#fff" fill-rule="evenodd"/>
<path d="M113.3 103.5L119.3 108.7" stroke="#fff" stroke-width="3.2" fill="none"/>
<path d="M118.8 108.6L133.2 120.9" stroke="#fff" stroke-width="6.3" stroke-linecap="round" fill="none"/>
<ellipse cx="101.1" cy="90.9" rx="17.1" ry="16.4" fill="#3c8dbc" stroke="#fff" stroke-width="3.8"/></g></svg>
<svg class="abs" style="left:160px;top:96px" width="1080" height="85" viewBox="160 96 1080 85">
<rect x="267.55" y="112.45" width="33" height="23.5" rx="2" fill="none" stroke="#006985" stroke-width="3.1"/>
<path d="M259.2 138.6H309.1V141a3 3 0 0 1-3 3H262.2a3 3 0 0 1-3-3z" fill="#006985"/>
<rect x="282" y="140.4" width="4.6" height="1.1" fill="#007290"/>
<g transform="translate(472.8 123.7) rotate(45)" fill="#004e2b" stroke="#004e2b"><path d="M-16.2 0H16.2V5.6A16.2 16.2 0 0 1-16.2 5.6z" stroke="none"/><path d="M-7.4 1V-15.1M7.4 1V-15.1M0 18V34" stroke-width="5.6" stroke-linecap="round" fill="none"/></g>
<polygon points="654.16,106.22 660.84,118.52 674.48,120.93 665.39,131.35 667.00,144.72 654.16,139.11 641.32,144.72 642.93,131.35 633.84,120.93 647.48,118.52" fill="#976309" stroke="#976309" stroke-width="1.8" stroke-linejoin="round"/>
<path d="M826.95 126.95H856.05M841.55 111.85V141.25" stroke="#976309" stroke-width="5.9" stroke-linecap="round" fill="none"/>
<polygon points="1019.2,106.7 1040.1,144.4 998.3,144.4" fill="#7b291f" stroke="#7b291f" stroke-width="5.2" stroke-linejoin="round"/>
<rect x="1015.7" y="118" width="7.4" height="12.7" fill="#913024"/><rect x="1015.8" y="134.4" width="6.8" height="6.4" fill="#913024"/>
<path d="M1181.4 129.1A23.8 23.8 0 0 1 1224.0 129.1A23.8 23.8 0 0 1 1181.4 129.1z" fill="none" stroke="#747474" stroke-width="3.4" stroke-linejoin="round"/>
<circle cx="1202.7" cy="129.1" r="11.8" fill="#747474"/>
<path d="M1195.9 126.2A7.8 7.8 0 0 1 1203.6 119.4" fill="none" stroke="#888888" stroke-width="2" stroke-linecap="round"/>
<path d="M1219.23 107.91L1196.47 150.39" stroke="#888888" stroke-width="5.5"/>
<path d="M1210.4 113.2L1193.3 145.1" stroke="#747474" stroke-width="5.3"/>
</svg>
<svg class="abs" style="left:10px;top:200px" width="30" height="290" viewBox="10 200 30 290">
<rect x="20.45" y="208.4" width="10.2" height="7.2" rx="0.8" fill="none" stroke="#b8c7ce" stroke-width="1.25"/><rect x="17.9" y="216.2" width="15.3" height="1.8" rx="0.6" fill="#b8c7ce"/>
<rect x="17.9" y="252" width="13.3" height="12" rx="1" fill="#fff"/>
<rect x="20.8" y="250" width="1.7" height="3.8" rx="0.8" fill="#fff" stroke="#1e282c" stroke-width="0.5"/><rect x="26.7" y="250" width="1.7" height="3.8" rx="0.8" fill="#fff" stroke="#1e282c" stroke-width="0.5"/>
<rect x="19.5" y="255.2" width="1.6" height="1.65" fill="#1e282c"/>
<rect x="19.5" y="258.15" width="1.6" height="1.65" fill="#1e282c"/>
<rect x="19.5" y="261.1" width="1.6" height="1.65" fill="#1e282c"/>
<rect x="22.45" y="255.2" width="1.6" height="1.65" fill="#1e282c"/>
<rect x="22.45" y="258.15" width="1.6" height="1.65" fill="#1e282c"/>
<rect x="22.45" y="261.1" width="1.6" height="1.65" fill="#1e282c"/>
<rect x="25.45" y="255.2" width="1.6" height="1.65" fill="#1e282c"/>
<rect x="25.45" y="258.15" width="1.6" height="1.65" fill="#1e282c"/>
<rect x="25.45" y="261.1" width="1.6" height="1.65" fill="#1e282c"/>
<rect x="28.4" y="255.2" width="1.6" height="1.65" fill="#1e282c"/>
<rect x="28.4" y="258.15" width="1.6" height="1.65" fill="#1e282c"/>
<rect x="28.4" y="261.1" width="1.6" height="1.65" fill="#1e282c"/>
<polygon points="19,295 23.2,295 21.9,298.8 25.1,298.1 20.5,308.2 21.4,301.6 17.9,302.2" fill="#b8c7ce"/>
<rect x="17.9" y="339" width="14.2" height="2.95" rx="0.3" fill="#b8c7ce"/><rect x="19.1" y="340.1" width="7.8" height="0.8" fill="#222d32"/><circle cx="30.5" cy="340.5" r="0.65" fill="#222d32"/>
<rect x="17.9" y="343" width="14.2" height="2.95" rx="0.3" fill="#b8c7ce"/><rect x="19.1" y="344.1" width="7.8" height="0.8" fill="#222d32"/><circle cx="30.5" cy="344.5" r="0.65" fill="#222d32"/>
<rect x="17.9" y="347.05" width="14.2" height="2.95" rx="0.3" fill="#b8c7ce"/><rect x="19.1" y="348.15000000000003" width="7.8" height="0.8" fill="#222d32"/><circle cx="30.5" cy="348.55" r="0.65" fill="#222d32"/>
<path d="M19.96 394.24L25.6 388.7" stroke="#b8c7ce" stroke-width="3.1" stroke-linecap="round"/><circle cx="27.5" cy="386.45" r="3.65" fill="#b8c7ce"/>
<circle cx="28.9" cy="385.95" r="1.55" fill="#222d32"/><path d="M28.9 385.95L32.2 383.6" stroke="#222d32" stroke-width="2.5"/><circle cx="20.45" cy="393.4" r="0.5" fill="#222d32"/>
<circle cx="23.99" cy="432.96" r="4.75" fill="#b8c7ce"/>
<rect x="17.89" y="431.76" width="12.2" height="2.4" rx="0.4" fill="#b8c7ce" transform="rotate(0 23.99 432.96)"/>
<rect x="17.89" y="431.76" width="12.2" height="2.4" rx="0.4" fill="#b8c7ce" transform="rotate(45 23.99 432.96)"/>
<rect x="17.89" y="431.76" width="12.2" height="2.4" rx="0.4" fill="#b8c7ce" transform="rotate(90 23.99 432.96)"/>
<rect x="17.89" y="431.76" width="12.2" height="2.4" rx="0.4" fill="#b8c7ce" transform="rotate(135 23.99 432.96)"/>
<circle cx="23.99" cy="432.96" r="1.8" fill="#222d32"/>
<path d="M19.9 475.3C20.8 472.9 25.1 472.7 25 475.5C24.9 477.4 22.5 477.2 22.5 479.2" fill="none" stroke="#b8c7ce" stroke-width="2.5"/><rect x="21" y="479.9" width="3" height="2.2" fill="#b8c7ce"/>
</svg>
<svg class="abs" style="left:196px;top:490px" width="62" height="22" viewBox="196 490 62 22"><path d="M209.8 495.3L203.2 500.5L209.8 505.7M244.3 495.3L250.9 500.5L244.3 505.7" fill="none" stroke="#333" stroke-width="2.2"/></svg>
<div class="ev evg" style="left:1011px;top:603px;width:84px"></div>
<div class="ev evg" style="left:1011px;top:677px;width:84px"></div>
<div class="ev evb" style="left:1013px;top:714px;width:7px"></div>
<div class="ev evb" style="left:1041px;top:714px;width:12px"></div>
<div class="ev evb" style="left:1066px;top:714px;width:2px"></div>
<div class="ev evb" style="left:1071px;top:714px;width:4px"></div>
<div class="ev evb" style="left:1079px;top:714px;width:3.7px"></div>
<div class="ev evb" style="left:1084px;top:714px;width:2px"></div>
<div class="ev evb" style="left:1087px;top:714px;width:6px"></div>
<div class="ev evb" style="left:1011px;top:825px;width:33.8px"></div>
<div class="ev evb" style="left:1046px;top:825px;width:8px"></div>
<div class="ev evb" style="left:1055px;top:825px;width:11px"></div>
<div class="ev evb" style="left:1067px;top:825px;width:9px"></div>
<div class="ev evg" style="left:1079px;top:825px;width:16px"></div>
<div class="ev evb" style="left:1011px;top:862px;width:26px"></div>
<div class="ev evb" style="left:1038px;top:862px;width:1px"></div>
<div class="ev evb" style="left:1040px;top:862px;width:15px"></div>
<div class="ev evb" style="left:1056px;top:862px;width:1px"></div>
<div class="ev evb" style="left:1058px;top:862px;width:8px"></div>
<div class="ev evb" style="left:1067px;top:862px;width:7px"></div>
<div class="ev evb" style="left:1075px;top:862px;width:3px"></div>
<div class="ev evb" style="left:1079px;top:862px;width:10px"></div>
<div class="ev evg" style="left:1090px;top:862px;width:5px"></div>
<div class="ev evb" style="left:1011px;top:899px;width:28px"></div>
<div class="ev evb" style="left:1040px;top:899px;width:5px"></div>
<div class="ev evb" style="left:1046px;top:899px;width:2px"></div>
<div class="ev evb" style="left:1050px;top:899px;width:5px"></div>
<div class="ev evb" style="left:1056px;top:899px;width:10px"></div>
<div class="ev evb" style="left:1067px;top:899px;width:6px"></div>
<div class="ev evb" style="left:1074px;top:899px;width:2px"></div>
<div class="ev evb" style="left:1077px;top:899px;width:3px"></div>
<div class="ev evb" style="left:1081px;top:899px;width:8px"></div>
<div class="ev evb" style="left:1090px;top:899px;width:1px"></div>
<div class="ev evb" style="left:1092px;top:899px;width:2px"></div>
<div class="ev evb" style="left:1011px;top:936px;width:31px"></div>
<div class="ev evb" style="left:1043px;top:936px;width:29px"></div>
<div class="ev evb" style="left:1073px;top:936px;width:16px"></div>
<div class="ev evg" style="left:1090px;top:936px;width:5px"></div>
<div class="ev evb" style="left:1011px;top:973px;width:67px"></div>
<div class="ev evg" style="left:1079px;top:973px;width:16px"></div>
<span class="t" style="left:165.26px;top:57.87px;font-size:22.13px;line-height:22.13px;font-weight:400;color:#bec5cb;transform:scaleX(0.9711)">Presence by Device</span>
<span class="t" style="left:173.96px;top:109.34px;font-size:35.04px;line-height:35.04px;font-weight:700;color:#fff;transform:scaleX(1.0405)">51</span>
<span class="t" style="left:357.78px;top:109.34px;font-size:35.04px;line-height:35.04px;font-weight:700;color:#fff;transform:scaleX(1.0216)">30</span>
<span class="t" style="left:541.96px;top:109.34px;font-size:35.04px;line-height:35.04px;font-weight:700;color:#fff;transform:scaleX(1.03)">0</span>
<span class="t" style="left:725.5999999999999px;top:109.34px;font-size:35.04px;line-height:35.04px;font-weight:700;color:#fff;transform:scaleX(1.03)">1</span>
<span class="t" style="left:907.94px;top:109.34px;font-size:35.04px;line-height:35.04px;font-weight:700;color:#fff;transform:scaleX(1.03)">0</span>
<span class="t" style="left:1091.13px;top:109.34px;font-size:35.04px;line-height:35.04px;font-weight:700;color:#fff;transform:scaleX(1.03)">0</span>
<span class="t" style="left:174.08px;top:152.51px;font-size:14.75px;line-height:14.75px;font-weight:700;color:#fff;transform:scaleX(0.9221)">All Devices</span>
<span class="t" style="left:357.84px;top:152.51px;font-size:14.75px;line-height:14.75px;font-weight:700;color:#fff;transform:scaleX(0.9649)">Connected</span>
<span class="t" style="left:541.46px;top:152.51px;font-size:14.75px;line-height:14.75px;font-weight:700;color:#fff;transform:scaleX(0.9406)">Favorites</span>
<span class="t" style="left:724.87px;top:152.51px;font-size:14.75px;line-height:14.75px;font-weight:700;color:#fff;transform:scaleX(0.9348)">New Devices</span>
<span class="t" style="left:908.05px;top:152.51px;font-size:14.75px;line-height:14.75px;font-weight:700;color:#fff;transform:scaleX(0.9476)">Down Alerts</span>
<span class="t" style="left:1090.66px;top:152.51px;font-size:14.75px;line-height:14.75px;font-weight:700;color:#fff;transform:scaleX(0.941)">Archived</span>
<span class="t" style="left:40.73px;top:207.97px;font-size:12.91px;line-height:12.91px;font-weight:400;color:#b8c7ce;-webkit-text-stroke:.2px #b8c7ce;transform:scaleX(0.9733)">Devices</span>
<span class="t" style="left:40.61px;top:251.97px;font-size:12.91px;line-height:12.91px;font-weight:400;color:#fff;-webkit-text-stroke:.35px #fff;transform:scaleX(0.9925)">Presence</span>
<span class="t" style="left:40.71px;top:295.97px;font-size:12.91px;line-height:12.91px;font-weight:400;color:#b8c7ce;-webkit-text-stroke:.2px #b8c7ce;transform:scaleX(0.9947)">Events</span>
<span class="t" style="left:40.64px;top:339.97px;font-size:12.91px;line-height:12.91px;font-weight:400;color:#b8c7ce;-webkit-text-stroke:.2px #b8c7ce;transform:scaleX(1.0587)">Network</span>
<span class="t" style="left:40.67px;top:383.97px;font-size:12.91px;line-height:12.91px;font-weight:400;color:#b8c7ce;-webkit-text-stroke:.2px #b8c7ce;transform:scaleX(1.0306)">Maintenance</span>
<span class="t" style="left:40.97px;top:427.97px;font-size:12.91px;line-height:12.91px;font-weight:400;color:#b8c7ce;-webkit-text-stroke:.2px #b8c7ce;transform:scaleX(1.0311)">Settings</span>
<span class="t" style="left:40.73px;top:471.97px;font-size:12.91px;line-height:12.91px;font-weight:400;color:#b8c7ce;-webkit-text-stroke:.2px #b8c7ce;transform:scaleX(0.9677)">Help / FAQ</span>
<span class="t" style="left:176.0px;top:213.55px;font-size:16.6px;line-height:16.6px;font-weight:400;color:#bec5cb;-webkit-text-stroke:.2px #bec5cb;transform:scaleX(0.999)">Device presence over time</span>
<span class="t" style="left:176.1px;top:441.25px;font-size:16.6px;line-height:16.6px;font-weight:400;color:#00c0ef;-webkit-text-stroke:.2px #00c0ef;transform:scaleX(0.9744)">All Devices</span>
<span class="t" style="left:632.81px;top:487.59px;font-size:18.44px;line-height:18.44px;font-weight:400;color:#bec5cb;-webkit-text-stroke:.2px #bec5cb;transform:scaleX(0.9891)">December 2022</span>
<span class="t" style="left:287.9px;top:494.47px;font-size:12.91px;line-height:12.91px;font-weight:400;color:#333;-webkit-text-stroke:.2px #333;transform:scaleX(1.0677)">today</span>
<span class="t" style="left:1074.0px;top:494.47px;font-size:12.91px;line-height:12.91px;font-weight:400;color:#333;-webkit-text-stroke:.2px #333;transform:scaleX(0.992)">year</span>
<span class="t" style="left:1116.16px;top:494.47px;font-size:12.91px;line-height:12.91px;font-weight:400;color:#333;-webkit-text-stroke:.2px #333;transform:scaleX(1.1353)">month</span>
<span class="t" style="left:1174.1px;top:494.47px;font-size:12.91px;line-height:12.91px;font-weight:400;color:#333;-webkit-text-stroke:.2px #333;transform:scaleX(1.0167)">week</span>
<span class="t" style="left:183.69px;top:546.57px;font-size:12.91px;line-height:12.91px;font-weight:700;color:#d3d7db;transform:scaleX(1.0106)">Devices</span>
<span class="t" style="left:1034.9px;top:11.44px;font-size:11.06px;line-height:11.06px;font-weight:400;color:#fff;-webkit-text-stroke:.35px #fff;transform:scaleX(0.9792)">Synology-NAS</span>
<span class="t" style="left:1033.91px;top:28.64px;font-size:11.06px;line-height:11.06px;font-weight:400;color:#fff;-webkit-text-stroke:.35px #fff;transform:scaleX(0.9945)">(27/12/2022, 12:15:31)</span>
<span class="t" style="left:1196.98px;top:18.87px;font-size:12.91px;line-height:12.91px;font-weight:400;color:#fff;-webkit-text-stroke:.35px #fff;transform:scaleX(1.0244)">Pi.Alert</span>
<span class="t" style="left:183.69px;top:578.97px;font-size:12.91px;line-height:12.91px;font-weight:700;color:#3c8dbc;transform:scaleX(1.008)">device 1</span>
<span class="t" style="left:183.68px;top:615.97px;font-size:12.91px;line-height:12.91px;font-weight:700;color:#3c8dbc;transform:scaleX(1.022)">device 2</span>
<span class="t" style="left:183.68px;top:652.97px;font-size:12.91px;line-height:12.91px;font-weight:700;color:#3c8dbc;transform:scaleX(1.022)">device 3</span>
<span class="t" style="left:183.68px;top:689.97px;font-size:12.91px;line-height:12.91px;font-weight:700;color:#3c8dbc;transform:scaleX(1.022)">device 4</span>
<span class="t" style="left:183.68px;top:726.97px;font-size:12.91px;line-height:12.91px;font-weight:700;color:#3c8dbc;transform:scaleX(1.018)">device 5</span>
<span class="t" style="left:183.68px;top:763.97px;font-size:12.91px;line-height:12.91px;font-weight:700;color:#3c8dbc;transform:scaleX(1.022)">device 6</span>
<span class="t" style="left:183.66px;top:800.97px;font-size:12.91px;line-height:12.91px;font-weight:700;color:#3c8dbc;transform:scaleX(1.0367)">device 7</span>
<span class="t" style="left:183.68px;top:837.97px;font-size:12.91px;line-height:12.91px;font-weight:700;color:#3c8dbc;transform:scaleX(1.022)">device 8</span>
<span class="t" style="left:183.68px;top:874.97px;font-size:12.91px;line-height:12.91px;font-weight:700;color:#3c8dbc;transform:scaleX(1.016)">device 9</span>
<span class="t" style="left:183.68px;top:911.97px;font-size:12.91px;line-height:12.91px;font-weight:700;color:#3c8dbc;transform:scaleX(1.0228)">device 10</span>
<span class="t" style="left:183.66px;top:948.97px;font-size:12.91px;line-height:12.91px;font-weight:700;color:#3c8dbc;transform:scaleX(1.0411)">device 11</span>
<span class="t" style="left:183.68px;top:985.97px;font-size:12.91px;line-height:12.91px;font-weight:700;color:#3c8dbc;transform:scaleX(1.0228)">device 12</span>
<!-- scrollbar -->
<div class="abs" style="left:1245.5px;top:-4px;width:3.3px;height:390px;border-radius:2px;background:rgba(255,255,255,.4)"></div>
</div>
</body>
</html>
